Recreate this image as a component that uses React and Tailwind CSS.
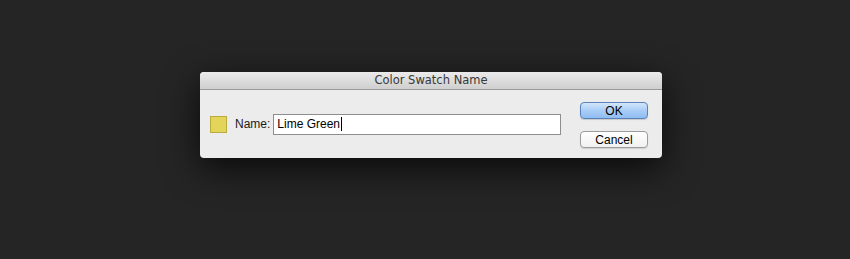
import React from "react";

function Button({ label, primary }) {
  return (
    <button
      type="button"
      className={
        primary
          ? "w-[68px] h-[17px] rounded-[4px] border border-[#5b82b8] bg-gradient-to-b from-[#d3e6fb] via-[#a9cdf6] to-[#8fbdf2] text-[12px] leading-none text-black shadow-[0_1px_1px_rgba(0,0,0,0.15)]"
          : "w-[68px] h-[17px] rounded-[4px] border border-[#9c9c9c] bg-gradient-to-b from-[#ffffff] to-[#f1f1f1] text-[12px] leading-none text-black shadow-[0_1px_1px_rgba(0,0,0,0.12)]"
      }
      style={{ fontFamily: "'Liberation Sans', sans-serif" }}
    >
      {label}
    </button>
  );
}

export default function App() {
  return (
    <div
      className="w-[850px] h-[259px] bg-[#252525] pt-[72px] pl-[200px]"
      style={{ fontFamily: "'Liberation Sans', sans-serif" }}
    >
      <div className="w-[462px] h-[86px] flex flex-col rounded-[4px] overflow-hidden bg-[#ececec] shadow-[0_10px_35px_rgba(0,0,0,0.75)]">
        <div
          className="h-[18px] shrink-0 flex items-center justify-center bg-gradient-to-b from-[#ebebeb] to-[#cfcfcf] border-b border-[#9a9a9a] text-[11.5px] text-[#383838]"
          style={{ fontFamily: "'DejaVu Sans', sans-serif" }}
        >
          Color Swatch Name
        </div>
        <div className="flex-1 flex items-center pl-[10px] pr-[14px]">
          <div className="w-[17px] h-[17px] bg-[#e2d55a] border border-[#b9ab3c]" />
          <span className="ml-[8px] text-[12px] text-[#1a1a1a]">Name:</span>
          <div className="ml-[3px] w-[288px] h-[21px] bg-white border border-[#8e8e8e] flex items-center pl-[3px] text-[12px] text-black">
            <span>Lime Green</span>
            <span className="w-px h-[14px] bg-black ml-px" />
          </div>
          <div className="ml-auto flex flex-col gap-[12px] mt-[2px]">
            <Button label="OK" primary />
            <Button label="Cancel" />
          </div>
        </div>
      </div>
    </div>
  );
}
